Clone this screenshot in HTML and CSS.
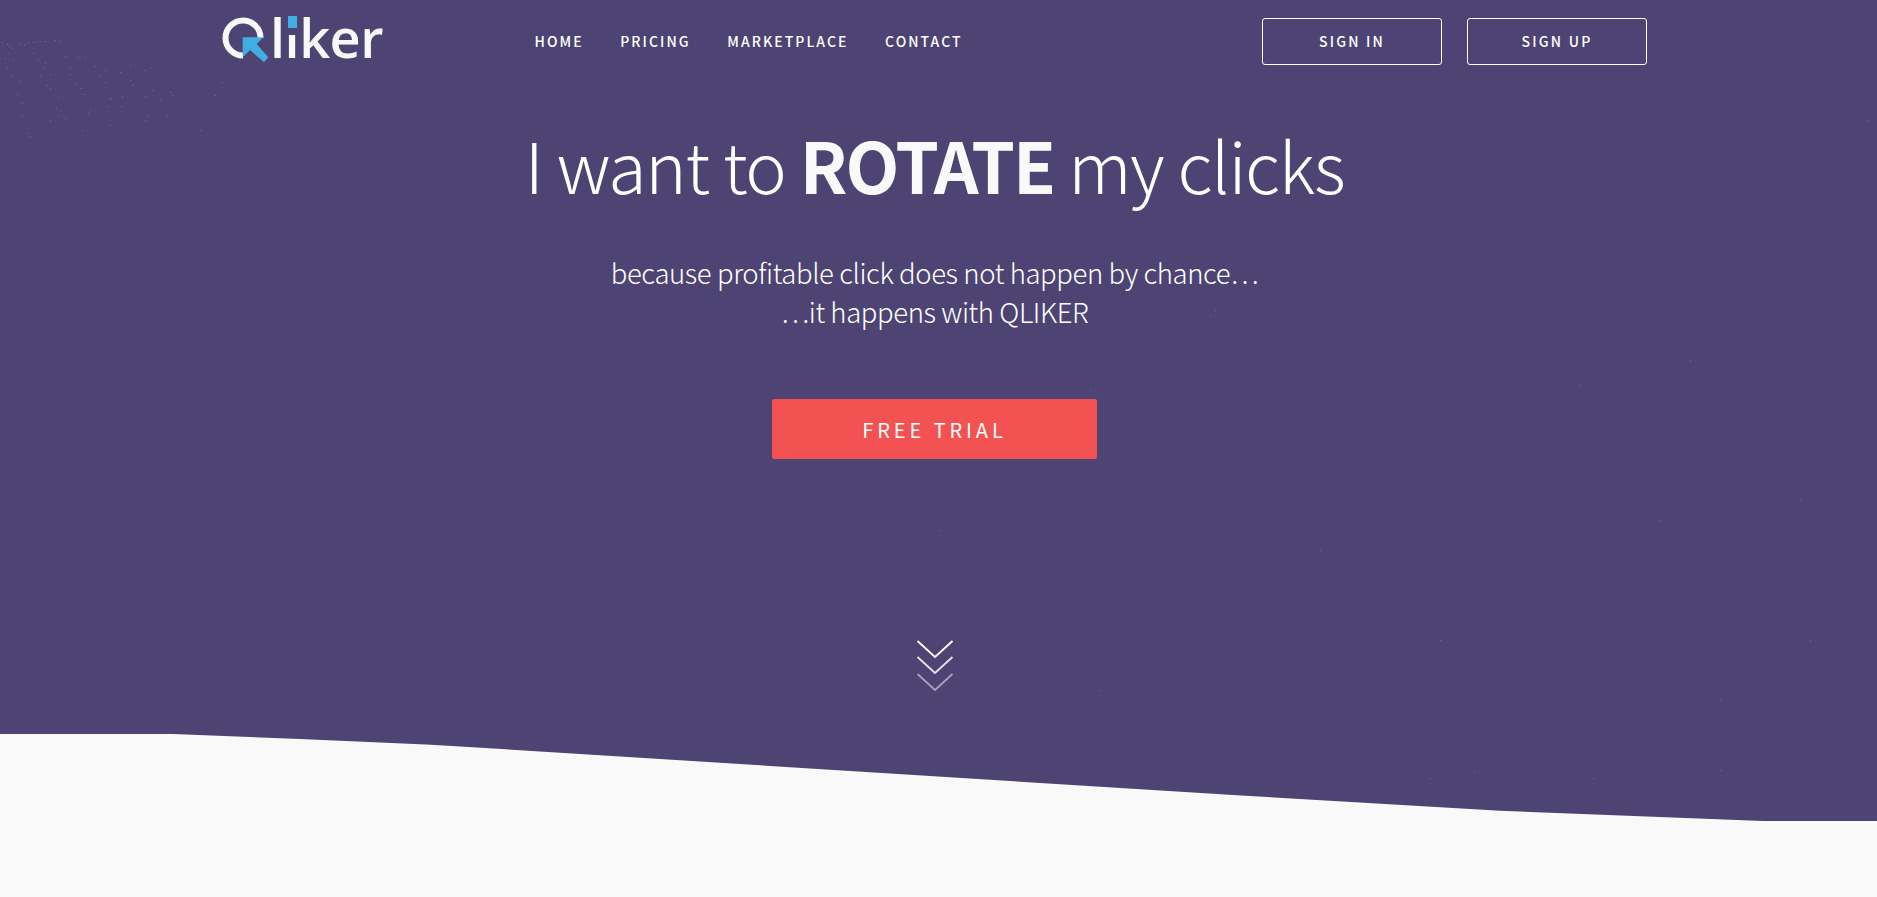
FILE: index.html
```html
<!DOCTYPE html>
<html lang="en">
<head>
<meta charset="utf-8">
<title>Qliker</title>
<link rel="stylesheet" href="styles.css">
</head>
<body>
<section class="hero">
  <svg class="specks" width="1877" height="897" viewBox="0 0 1877 897" aria-hidden="true">
    <path d="M2 42h1v1h-1zM7 44h1v1h-1zM9 46h1v1h-1zM12 48h1v1h-1zM20 43h1v1h-1zM24 44h1v1h-1zM28 42h1v1h-1zM33 42h1v1h-1zM36 41h1v1h-1zM40 41h1v1h-1zM45 41h1v1h-1zM55 40h1v1h-1zM60 41h1v1h-1zM9 53h1v1h-1zM5 58h1v1h-1zM13 60h1v1h-1zM7 67h1v1h-1zM33 53h1v1h-1zM38 60h1v1h-1zM45 63h1v1h-1zM43 67h1v1h-1zM65 56h1v1h-1zM78 57h1v1h-1zM85 57h1v1h-1zM95 66h1v1h-1zM70 67h1v1h-1zM105 70h1v1h-1zM120 72h1v1h-1zM130 65h1v1h-1zM145 70h1v1h-1zM150 68h1v1h-1zM12 75h1v1h-1zM20 81h1v1h-1zM40 75h1v1h-1zM50 74h1v1h-1zM47 85h1v1h-1zM70 74h1v1h-1zM76 84h1v1h-1zM100 75h1v1h-1zM105 82h1v1h-1zM130 80h1v1h-1zM132 85h1v1h-1zM17 94h1v1h-1zM22 103h1v1h-1zM50 88h1v1h-1zM58 97h1v1h-1zM80 88h1v1h-1zM84 94h1v1h-1zM110 98h1v1h-1zM108 106h1v1h-1zM145 96h1v1h-1zM152 90h1v1h-1zM170 92h1v1h-1zM22 116h1v1h-1zM56 108h1v1h-1zM58 115h1v1h-1zM65 118h1v1h-1zM90 110h1v1h-1zM110 99h1v1h-1zM122 96h1v1h-1zM121 106h1v1h-1zM160 100h1v1h-1zM172 95h1v1h-1zM28 133h1v1h-1zM30 136h1v1h-1zM50 120h1v1h-1zM60 110h1v1h-1zM88 113h1v1h-1zM82 130h1v1h-1zM110 125h1v1h-1zM145 120h1v1h-1zM148 115h1v1h-1zM167 116h1v1h-1zM200 130h1v1h-1zM215 95h1v1h-1zM222 82h1v1h-1zM1867 120h1v1h-1zM1800 500h1v1h-1zM1690 360h1v1h-1zM1580 385h1v1h-1zM1440 640h1v1h-1zM1320 550h1v1h-1zM1100 690h1v1h-1zM940 530h1v1h-1zM1660 520h1v1h-1zM1810 640h1v1h-1zM1720 700h1v1h-1zM1430 778h1v1h-1zM1474 771h1v1h-1zM1593 778h1v1h-1zM1720 770h1v1h-1zM1745 820h1v1h-1zM1215 310h1v1h-1zM1090 390h1v1h-1zM1210 315h1v1h-1z"/>
  </svg>
  <header class="topbar">
    <a class="logo" href="#" aria-label="Qliker">
      <svg class="logo-q" width="50" height="50" viewBox="0 0 50 50" aria-hidden="true">
        <path class="logo-ring" d="M21 41.5 A17.5 17.5 0 1 1 38.5 24"/>
        <path class="logo-arrow" d="M20.7 23.3 H41.3 L34.7 30 L46.3 43.3 L42 48.3 L28 36 L20.7 43.3 Z"/>
      </svg>
      <span class="logo-text">l<span class="logo-i">i</span>ker</span>
    </a>
    <nav class="menu">
      <a href="#">HOME</a>
      <a href="#">PRICING</a>
      <a href="#">MARKETPLACE</a>
      <a href="#">CONTACT</a>
    </nav>
    <div class="auth">
      <a class="ghost" href="#">SIGN IN</a>
      <a class="ghost" href="#">SIGN UP</a>
    </div>
  </header>
  <div class="intro">
    <h1>I want to <strong>ROTATE</strong> my clicks</h1>
    <p>because profitable click does not happen by chance…<br>…it happens with QLIKER</p>
    <a class="cta" href="#">FREE TRIAL</a>
    <svg class="chevrons" width="38" height="54" viewBox="0 0 38 54" aria-hidden="true">
      <path d="M1.5 2 L19 18 L36.5 2"/>
      <path class="chev-mid" d="M1.5 18 L19 34 L36.5 18"/>
      <path class="chev-low" d="M1.5 35 L19 51 L36.5 35"/>
    </svg>
  </div>
  <svg class="wave" viewBox="0 0 1877 164" preserveAspectRatio="none" aria-hidden="true">
    <path d="M0 1 H173 L300 6 L431 11.7 L640 24.7 L1237 62.3 L1500 77.7 L1763 88 H1877 V164 H0 Z"/>
  </svg>
</section>
</body>
</html>
```
FILE: styles.css
```css
* { box-sizing: border-box; }
html, body { margin: 0; height: 100%; overflow: hidden; }
body {
  background: #f9f9f9;
  color: #fff;
  font-family: "Noto Sans CJK JP", "Source Sans Pro", "Open Sans", sans-serif;
}
a { color: inherit; text-decoration: none; }
.hero {
  position: relative;
  height: 897px;
  background: #4d4474;
}
.specks {
  position: absolute;
  left: 0;
  top: 0;
  fill: #6f6796;
}
.topbar {
  position: relative;
  display: flex;
  align-items: center;
  width: 1425px;
  height: 82px;
  margin-left: 222px;
}
.logo {
  display: flex;
  align-items: flex-start;
  width: 312.5px;
  height: 50px;
  margin-top: -4px;
  color: #f8f8f8;
}
.logo-q { flex: none; margin-right: -2px; }
.logo-ring {
  fill: none;
  stroke: #f8f8f8;
  stroke-width: 6;
}
.logo-arrow { fill: #42ade2; }
.logo-text {
  margin-top: -2px;
  font-family: "Open Sans", sans-serif;
  font-size: 54px;
  font-weight: 600;
  line-height: 50px;
  letter-spacing: -0.5px;
}
.logo-i { position: relative; }
.logo-i::before {
  content: "";
  position: absolute;
  left: 3px;
  top: 16px;
  width: 9px;
  height: 12px;
  background: #42ade2;
  box-shadow: 0 7px 0 0 #4d4474;
}
.menu {
  display: flex;
  gap: 36.6px;
  font-size: 14px;
  font-weight: 500;
  letter-spacing: 2.05px;
  line-height: 20px;
  flex: 1;
}
.auth { display: flex; gap: 25px; }
.ghost {
  display: flex;
  align-items: center;
  justify-content: center;
  width: 180px;
  height: 47px;
  border: 1px solid #fff;
  border-radius: 3px;
  font-size: 14px;
  font-weight: 500;
  letter-spacing: 2.2px;
}
.intro {
  position: relative;
  display: flex;
  flex-direction: column;
  align-items: center;
  width: 1869px;
}
h1 {
  margin: 54px 0 0;
  font-size: 70px;
  font-weight: 200;
  letter-spacing: -1.3px;
  line-height: 56px;
  color: #fff;
  white-space: nowrap;
}
h1 strong { font-weight: 700; color: #f9f9f9; letter-spacing: -2px; }
.intro p {
  margin: 61px 0 0;
  font-size: 27.5px;
  font-weight: 200;
  letter-spacing: -0.4px;
  line-height: 39px;
  text-align: center;
}
.cta {
  display: flex;
  align-items: center;
  justify-content: center;
  width: 325px;
  height: 60px;
  margin-top: 68px;
  background: #f35252;
  border-radius: 2px;
  font-size: 20px;
  font-weight: 400;
  letter-spacing: 3.9px;
}
.chevrons {
  margin-top: 180px;
  fill: none;
  stroke: #fff;
  stroke-width: 1.8;
}
.chev-mid { stroke-opacity: .85; }
.chev-low { stroke-opacity: .5; }
.wave {
  position: absolute;
  left: 0;
  bottom: 0;
  width: 100%;
  height: 164px;
  fill: #f9f9f9;
}
```
